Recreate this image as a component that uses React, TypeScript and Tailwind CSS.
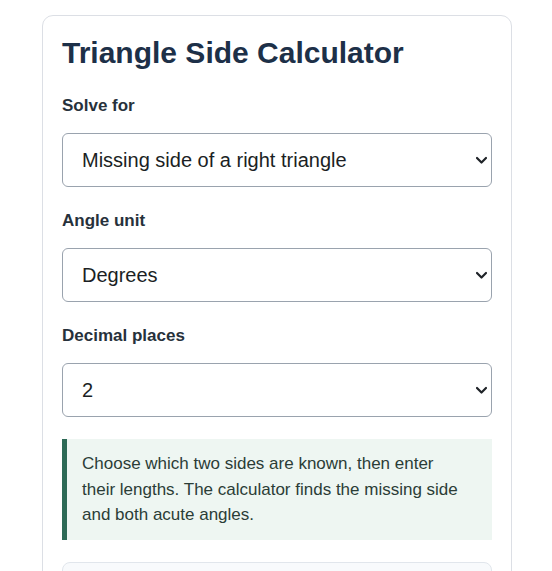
import { useState } from "react";

const SOLVE_OPTIONS = ["Missing side of a right triangle", "Third side from two sides and angle", "Sides from angles and one side"];
const ANGLE_UNITS = ["Degrees", "Radians"];
const DECIMALS = ["0", "1", "2", "3", "4", "5", "6"];

function Field({ label, value, options, onChange }: { label: string; value: string; options: string[]; onChange: (v: string) => void }) {
  return (
    <div className="mb-[22px]">
      <label className="block text-[17px] font-bold leading-6 text-[#27313b] mb-[15px]">{label}</label>
      <div className="relative">
        <select
          value={value}
          onChange={(e) => onChange(e.target.value)}
          className="block w-full h-[54px] appearance-none pl-[19px] pr-8 text-[20px] text-[#1b1f24] bg-white border border-[#9aa3ae] rounded-[6px]"
        >
          {options.map((o) => (
            <option key={o} value={o}>{o}</option>
          ))}
        </select>
        <svg
          className="pointer-events-none absolute right-[4px] top-1/2 -translate-y-1/2"
          width="13"
          height="13"
          viewBox="0 0 13 13"
          fill="none"
          stroke="#1f2328"
          strokeWidth="2.2"
          strokeLinecap="round"
          strokeLinejoin="round"
        >
          <path d="M2 4.5l4.5 4.5 4.5-4.5" />
        </svg>
      </div>
    </div>
  );
}

export default function App() {
  const [solve, setSolve] = useState(SOLVE_OPTIONS[0]);
  const [unit, setUnit] = useState(ANGLE_UNITS[0]);
  const [decimals, setDecimals] = useState("2");

  return (
    <div className="min-h-screen bg-white pt-[15px]" style={{ fontFamily: '"Liberation Sans", Arial, sans-serif' }}>
      <div className="w-[470px] ml-[42px] bg-white border border-[#dcdfe5] rounded-[11px] px-[19px] pt-5 pb-6">
        <h1 className="text-[30px] leading-[34px] font-bold text-[#1d3048] mb-6">Triangle Side Calculator</h1>

        <Field label="Solve for" value={solve} options={SOLVE_OPTIONS} onChange={setSolve} />
        <Field label="Angle unit" value={unit} options={ANGLE_UNITS} onChange={setUnit} />
        <Field label="Decimal places" value={decimals} options={DECIMALS} onChange={setDecimals} />

        <div className="mt-[22px] bg-[#eef6f2] border-l-[5px] border-[#2d6a56] pl-[15px] pr-[24px] py-3 text-[17px] leading-[1.5] text-[#2b3d37]">
          Choose which two sides are known, then enter their lengths. The calculator finds the missing side and both acute angles.
        </div>

        <div className="mt-[22px] h-[120px] bg-[#f8fafc] border border-[#e1e6ec] rounded-[8px]" />
      </div>
    </div>
  );
}
